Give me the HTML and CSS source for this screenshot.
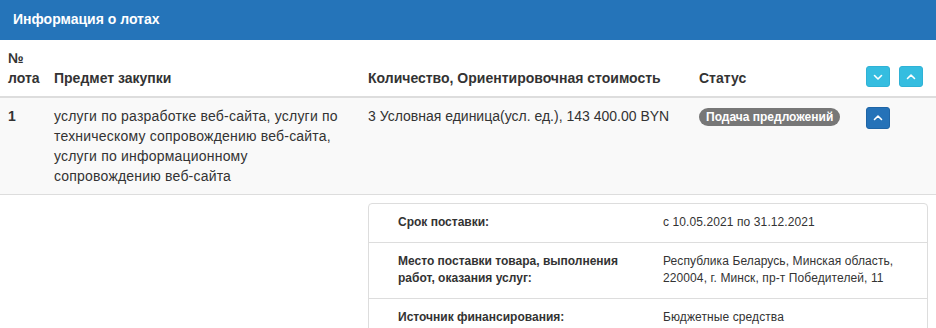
FILE: index.html
```html
<!DOCTYPE html>
<html lang="ru">
<head>
<meta charset="utf-8">
<title>Информация о лотах</title>
<link rel="stylesheet" href="styles.css">
</head>
<body>
<div class="panel-heading">Информация о лотах</div>
<table class="lots">
  <colgroup>
    <col class="c-num"><col class="c-subj"><col class="c-qty"><col class="c-status"><col class="c-act">
  </colgroup>
  <thead>
    <tr>
      <th>№ лота</th>
      <th>Предмет закупки</th>
      <th>Количество, Ориентировочная стоимость</th>
      <th>Статус</th>
      <th class="act">
        <span class="btn btn-info"><svg viewBox="0 0 10 10" width="10" height="10"><polyline points="1.5,3.5 5,7 8.5,3.5" /></svg></span>
        <span class="btn btn-info"><svg viewBox="0 0 10 10" width="10" height="10"><polyline points="1.5,6.5 5,3 8.5,6.5" /></svg></span>
      </th>
    </tr>
  </thead>
  <tbody>
    <tr class="lot-row">
      <td class="num">1</td>
      <td class="subj">услуги по разработке веб-сайта, услуги по техническому сопровождению веб-сайта, услуги по информационному сопровождению веб-сайта</td>
      <td>3 Условная единица(усл. ед.), 143 400.00 BYN</td>
      <td><span class="badge">Подача предложений</span></td>
      <td class="act"><span class="btn btn-primary"><svg viewBox="0 0 10 10" width="10" height="10"><polyline points="1.5,6.5 5,3 8.5,6.5" /></svg></span></td>
    </tr>
    <tr class="detail-row">
      <td colspan="2"></td>
      <td colspan="3">
        <div class="details">
          <div class="d-row">
            <div class="d-label">Срок поставки:</div>
            <div class="d-value">с 10.05.2021 по 31.12.2021</div>
          </div>
          <div class="d-row">
            <div class="d-label">Место поставки товара, выполнения работ, оказания услуг:</div>
            <div class="d-value">Республика Беларусь, Минская область, 220004, г. Минск, пр-т Победителей, 11</div>
          </div>
          <div class="d-row">
            <div class="d-label">Источник финансирования:</div>
            <div class="d-value">Бюджетные средства</div>
          </div>
        </div>
      </td>
    </tr>
  </tbody>
</table>
</body>
</html>
```
FILE: styles.css
```css
html, body {
  margin: 0;
  padding: 0;
  background: #fff;
  font-family: "Liberation Sans", Arial, Helvetica, sans-serif;
  color: #333;
  font-size: 14px;
  line-height: 20px;
}
.panel-heading {
  background: #2574b9;
  color: #fff;
  font-weight: bold;
  font-size: 14px;
  line-height: 20px;
  padding: 9px 13px 11px;
}
.lots {
  width: 936px;
  border-collapse: collapse;
  table-layout: fixed;
}
.c-num { width: 46px; }
.c-subj { width: 314px; }
.c-qty { width: 331px; }
.c-status { width: 167px; }
.c-act { width: 78px; }
.lots th, .lots td {
  padding: 8px;
  text-align: left;
  vertical-align: top;
}
.lots th {
  vertical-align: bottom;
  font-weight: bold;
  border-bottom: 2px solid #ddd;
}
.lots th.act {
  white-space: nowrap;
  padding-bottom: 9px;
}
.lot-row td {
  background: #f9f9f9;
  border-bottom: 1px solid #ddd;
}
.lot-row td.subj { letter-spacing: 0.2px; }
.lot-row td.num { font-weight: bold; }
.btn {
  display: inline-flex;
  align-items: center;
  justify-content: center;
  width: 24px;
  height: 21px;
  border-radius: 3px;
  box-sizing: border-box;
  vertical-align: middle;
}
.btn + .btn { margin-left: 5px; }
.btn svg polyline {
  fill: none;
  stroke: #fff;
  stroke-width: 1.6;
  stroke-linecap: round;
  stroke-linejoin: round;
}
.btn-info {
  background: #35bde0;
  border: 1px solid #2fb2d6;
}
.btn-primary {
  background: #2572b8;
  border: 1px solid #1f65a6;
  height: 22px;
}
.lot-row td.act { padding-top: 9px; }
.badge {
  display: inline-block;
  background: #777;
  color: #fff;
  font-weight: bold;
  font-size: 12px;
  line-height: 12px;
  padding: 3px 7px 3px;
  border-radius: 10px;
  white-space: nowrap;
  margin-top: 2px;
}
.details {
  border: 1px solid #ddd;
  border-radius: 4px;
  font-size: 12px;
  line-height: 17px;
  color: #333;
}
.d-row {
  display: grid;
  grid-template-columns: 294px 1fr;
  border-top: 1px solid #ddd;
}
.d-row:first-child { border-top: 0; }
.d-label {
  font-weight: bold;
  padding: 10px 20px 11px 29px;
}
.d-value {
  padding: 10px 8px 11px 0;
  letter-spacing: 0.1px;
}
```
